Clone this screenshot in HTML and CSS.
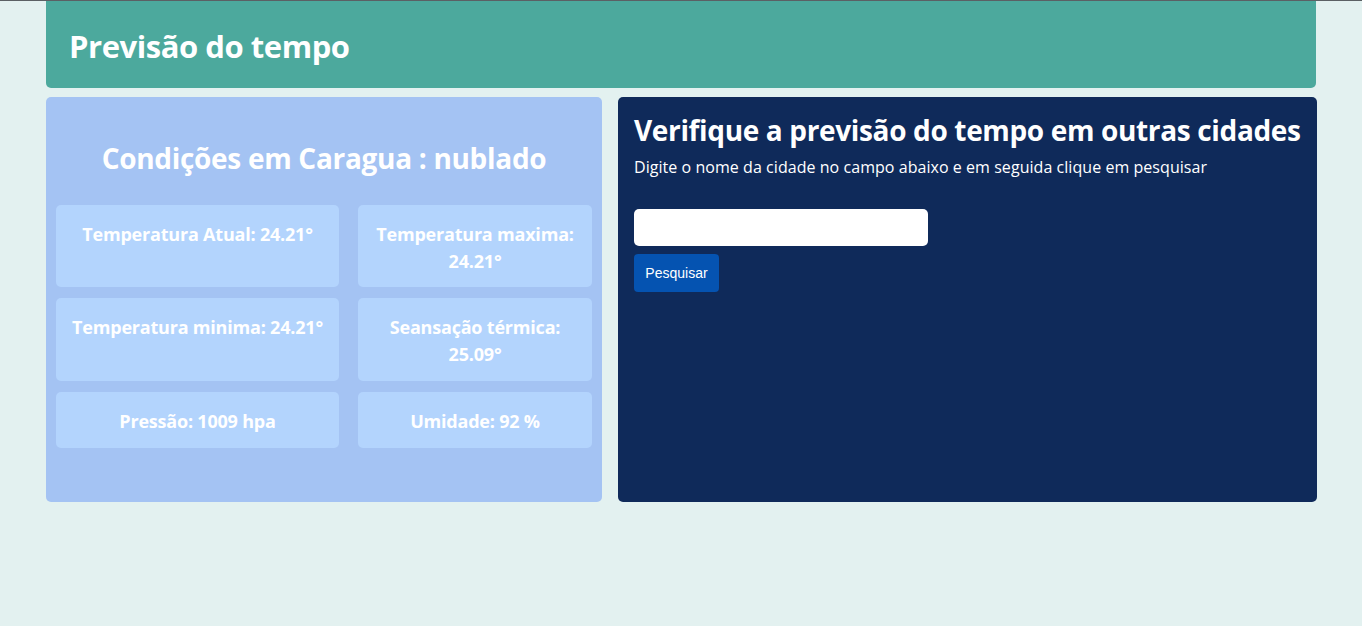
FILE: index.html
```html
<!DOCTYPE html>
<html lang="pt-BR">
<head>
<meta charset="utf-8">
<title>Previsão do tempo</title>
<link rel="stylesheet" href="styles.css">
</head>
<body>
<div class="topline"></div>
<div class="container">
  <header class="header">
    <h1 class="header-title">Previsão do tempo</h1>
  </header>
  <main class="content">
    <section class="current">
      <h2 class="current-title">Condições em Caragua : nublado</h2>
      <div class="stats">
        <div class="stat">Temperatura Atual: 24.21°</div>
        <div class="stat">Temperatura maxima: 24.21°</div>
        <div class="stat">Temperatura minima: 24.21°</div>
        <div class="stat">Seansação térmica: 25.09°</div>
        <div class="stat">Pressão: 1009 hpa</div>
        <div class="stat">Umidade: 92 %</div>
      </div>
    </section>
    <section class="search">
      <h2 class="search-title">Verifique a previsão do tempo em outras cidades</h2>
      <p class="search-text">Digite o nome da cidade no campo abaixo e em seguida clique em pesquisar</p>
      <form class="search-form">
        <input class="search-input" type="text">
        <button class="search-button" type="button">Pesquisar</button>
      </form>
    </section>
  </main>
</div>
</body>
</html>
```

FILE: styles.css
```css
* { box-sizing: border-box; }

html, body {
  margin: 0;
  padding: 0;
  background: #e3f1f0;
}

body {
  font-family: "Open Sans", "Noto Sans", sans-serif;
  color: #fff;
}

.topline {
  height: 1px;
  background: #5b6064;
}

.container {
  width: 1270px;
  margin: 0 auto;
}

.header {
  background: #4ca99d;
  height: 87px;
  border-radius: 0 0 5px 5px;
  padding: 2px 23px 0;
  display: flex;
  align-items: center;
}

.header-title {
  margin: 0;
  font-size: 31px;
  font-weight: 700;
  letter-spacing: -0.45px;
}

.content {
  display: grid;
  grid-template-columns: 556px 1fr;
  gap: 16px;
  margin-top: 9px;
}

.current {
  background: #a4c3f3;
  border-radius: 5px;
  padding: 10px 10px 54px;
}

.current-title {
  margin: 33px 0 28px;
  text-align: center;
  font-size: 28px;
  line-height: 37px;
  font-weight: 700;
  letter-spacing: -0.3px;
}

.stats {
  display: grid;
  grid-template-columns: 283px 234px;
  grid-template-rows: 82px 83px 56px;
  gap: 11px 19px;
}

.stat {
  background: #b3d4fd;
  border-radius: 5px;
  padding: 16px 8px 0;
  text-align: center;
  font-weight: 700;
  font-size: 18px;
  line-height: 27px;
  letter-spacing: -0.2px;
}

.search {
  background: #0f2a5a;
  border-radius: 5px;
  padding: 16px 16px;
}

.search-title {
  margin: 0;
  font-size: 28px;
  line-height: 34px;
  font-weight: 700;
  letter-spacing: -0.35px;
  white-space: nowrap;
}

.search-text {
  margin: 10px 0 0;
  font-size: 16px;
  line-height: 20px;
  letter-spacing: 0.05px;
}

.search-form {
  display: flex;
  flex-direction: column;
  align-items: flex-start;
  gap: 8px;
  margin-top: 32px;
}

.search-input {
  width: 294px;
  height: 37px;
  border: none;
  border-radius: 5px;
  background: #fff;
  padding: 0 10px;
}

.search-button {
  height: 38px;
  width: 85px;
  border: none;
  border-radius: 4px;
  background: #0553b1;
  color: #fff;
  font-family: "Liberation Sans", Arial, sans-serif;
  font-size: 14px;
  padding: 0;
}
```
